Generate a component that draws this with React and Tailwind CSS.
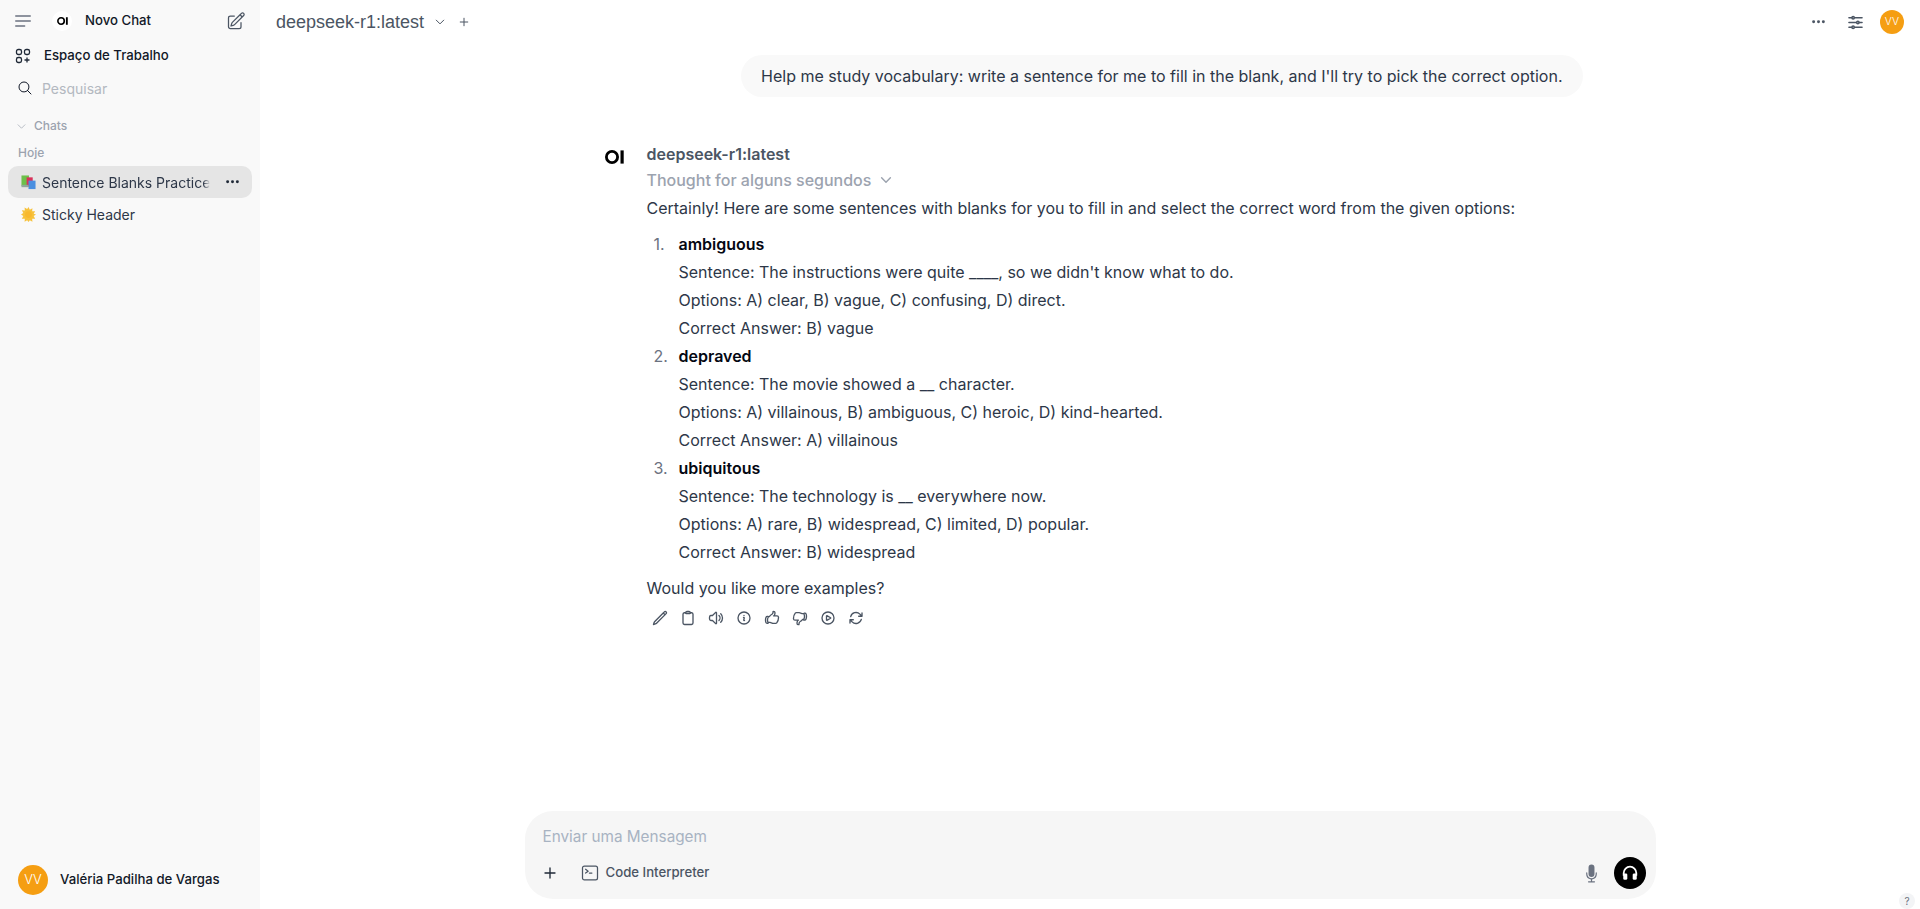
import React from "react";
import {
  HiOutlinePencilSquare, HiOutlineMagnifyingGlass, HiOutlineChevronDown, HiOutlineAdjustmentsHorizontal,
  HiOutlinePencil, HiOutlineClipboard, HiOutlineSpeakerWave, HiOutlineInformationCircle, HiOutlineHandThumbUp,
  HiOutlineHandThumbDown, HiOutlinePlayCircle, HiOutlineArrowPath, HiOutlineCommandLine, HiOutlinePlus, HiMicrophone,
} from "react-icons/hi2";

const Logo = ({ className }) => (
  <svg viewBox="0 0 19 14" className={className} fill="none">
    <circle cx="7" cy="7" r="5.600" stroke="#000" strokeWidth="2.800" />
    <rect x="15.500" y="0.4" width="3.200" height="13.2" fill="#000" />
  </svg>
);

const Dots = ({ className }) => (
  <svg viewBox="0 0 16 4" className={className} fill="currentColor">
    <circle cx="2" cy="2" r="1.800" /><circle cx="8" cy="2" r="1.800" /><circle cx="14" cy="2" r="1.800" />
  </svg>
);

const Books = () => (
  <svg viewBox="0 0 16 16" className="w-[15px] h-[15px] shrink-0">
    <rect x="0.500" y="0.500" width="8" height="11" fill="#6cc04a" />
    <rect x="6" y="2.500" width="6.500" height="10" fill="#d8325a" />
    <rect x="8" y="6" width="7.500" height="9" fill="#4a8fe0" />
    <rect x="0.500" y="10.500" width="7.500" height="2.500" fill="#8fa89a" />
  </svg>
);

const Sun = () => (
  <svg viewBox="0 0 16 16" className="w-[15px] h-[15px] shrink-0">
    <path d="M8 0l1.400 3 2.800-1.600-.3 3.200 3.200-.1-1.600 2.800L16 8l-2.500 1.700 1.600 2.800-3.200-.1.3 3.200-2.800-1.600L8 16l-1.400-2-2.800 1.600.3-3.200-3.200.1 1.600-2.800L0 8l2.500-1.700L.9 3.500l3.200.1-.3-3.200 2.800 1.600z" fill="#f7c23c" />
    <circle cx="8" cy="8" r="3.600" fill="#f8b92e" />
  </svg>
);

const Workspace = () => (
  <svg viewBox="0 0 16 16" className="w-[16px] h-[16px]" fill="none" stroke="#1f2937" strokeWidth="1.300">
    <rect x="1.500" y="1.500" width="5" height="5" rx="1.800" />
    <rect x="9.500" y="1.500" width="5" height="5" rx="1.800" />
    <rect x="1.500" y="9.500" width="5" height="5" rx="1.800" />
    <path d="M12 9.500v5M9.500 12h5" />
  </svg>
);

const Headphone = () => (
  <svg viewBox="0 0 20 20" className="w-[18px] h-[18px]">
    <path d="M3 13V10a7 7 0 0 1 14 0v3" fill="none" stroke="#fff" strokeWidth="2" />
    <rect x="2.500" y="10.500" width="4.500" height="7" rx="1.500" fill="#fff" />
    <rect x="13" y="10.500" width="4.500" height="7" rx="1.500" fill="#fff" />
  </svg>
);

const Avatar = ({ className }) => (
  <div className={`rounded-full bg-[#f59e12] text-white flex items-center justify-center font-['Inter'] font-light ${className}`}>VV</div>
);

const items = [
  { t: "ambiguous", l: ["Sentence: The instructions were quite ____, so we didn't know what to do.", "Options: A) clear, B) vague, C) confusing, D) direct.", "Correct Answer: B) vague"] },
  { t: "depraved", l: ["Sentence: The movie showed a __ character.", "Options: A) villainous, B) ambiguous, C) heroic, D) kind-hearted.", "Correct Answer: A) villainous"] },
  { t: "ubiquitous", l: ["Sentence: The technology is __ everywhere now.", "Options: A) rare, B) widespread, C) limited, D) popular.", "Correct Answer: B) widespread"] },
];

const actions = [HiOutlinePencil, HiOutlineClipboard, HiOutlineSpeakerWave, HiOutlineInformationCircle, HiOutlineHandThumbUp, HiOutlineHandThumbDown, HiOutlinePlayCircle, HiOutlineArrowPath];

export default function App() {
  return (
    <div className="flex h-[909px] w-full overflow-hidden bg-white font-['Inter',sans-serif] text-[#2d3748] relative">
      <aside className="w-[260px] shrink-0 bg-[#f9f9f9] flex flex-col">
        <div className="h-[42px] flex items-center pl-[15px] pr-[14px]">
          <svg viewBox="0 0 16 12" className="w-[16px] h-[12px]" fill="none" stroke="#6b7280" strokeWidth="1.300" strokeLinecap="round">
            <path d="M.7 1h14.600M.7 6h14.600M.7 11h9" />
          </svg>
          <div className="ml-[21px] w-[20px] h-[20px] rounded-full bg-white flex items-center justify-center">
            <Logo className="w-[11px] h-[8px]" />
          </div>
          <span className="ml-[13px] text-[13.200px] font-medium text-[#111827]">Novo Chat</span>
          <HiOutlinePencilSquare className="ml-auto w-[20px] h-[20px] text-[#4b5563]" />
        </div>
        <div className="h-[28px] flex items-center pl-[15px] gap-[13px]">
          <Workspace />
          <span className="text-[13.200px] font-medium text-[#111827]">Espaço de Trabalho</span>
        </div>
        <div className="h-[36px] flex items-center pl-[17px] gap-[9px]">
          <HiOutlineMagnifyingGlass className="w-[16px] h-[16px] text-[#111827]" />
          <span className="text-[14px] text-[#b3b8c0]">Pesquisar</span>
        </div>
        <div className="mt-[8px] h-[24px] flex items-center pl-[16px] gap-[7px] text-[#9ca3af]">
          <HiOutlineChevronDown className="w-[11px] h-[11px]" />
          <span className="text-[12px] font-medium">Chats</span>
        </div>
        <div className="mt-[3px] h-[24px] flex items-center pl-[18px] text-[12px] font-medium text-[#9ca3af]">Hoje</div>
        <div className="mt-[1px] mx-[8px] h-[32px] rounded-[10px] bg-[#e5e5e5] flex items-center pl-[13px] gap-[6px]">
          <Books />
          <span className="text-[14px] text-[#2d3748] w-[168px] whitespace-nowrap overflow-hidden [mask-image:linear-gradient(to_right,black_96%,transparent)]">Sentence Blanks Practice</span>
          <Dots className="ml-[10px] w-[13px] h-[3.500px] text-[#1f2937]" />
        </div>
        <div className="mx-[8px] h-[32px] flex items-center pl-[13px] gap-[6px]">
          <Sun />
          <span className="text-[14px] text-[#2d3748]">Sticky Header</span>
        </div>
        <div className="mt-auto h-[58px] flex items-center pl-[18px] gap-[12px]">
          <Avatar className="w-[30px] h-[30px] text-[13px]" />
          <span className="text-[13.200px] font-medium text-[#111827]">Valéria Padilha de Vargas</span>
        </div>
      </aside>

      <main className="flex-1 flex flex-col min-w-0">
        <header className="h-[44px] shrink-0 flex items-center pl-[16px] pr-[16px]">
          <span className="font-['Liberation_Sans'] text-[18px] text-[#4b5563]">deepseek-r1:latest</span>
          <HiOutlineChevronDown className="ml-[10px] w-[12px] h-[12px] text-[#4b5563]" strokeWidth={2} />
          <HiOutlinePlus className="ml-[12px] w-[12px] h-[12px] text-[#4b5563]" strokeWidth={2} />
          <Dots className="ml-auto w-[13px] h-[3.500px] text-[#4b5563]" />
          <HiOutlineAdjustmentsHorizontal className="ml-[21px] w-[19px] h-[19px] text-[#4b5563]" strokeWidth={2} />
          <Avatar className="ml-[15px] w-[24px] h-[24px] text-[10.500px]" />
        </header>

        <div className="flex-1 min-h-0 w-[985px] mx-auto">
          <div className="mt-[11px] flex justify-end">
            <div className="h-[42px] px-[20px] rounded-[21px] bg-[#f9f9f9] flex items-center text-[16px] whitespace-nowrap">
              Help me study vocabulary: write a sentence for me to fill in the blank, and I'll try to pick the correct option.
            </div>
          </div>
          <div className="mt-[46px] flex">
            <div className="w-[49px] pl-[7px] pt-[7px] shrink-0">
              <Logo className="w-[19px] h-[14px]" />
            </div>
            <div className="flex-1 text-[16px] leading-[28px]">
              <div className="font-semibold text-[#4b5563] h-[22px] leading-[22px]">deepseek-r1:latest</div>
              <div className="mt-[2px] flex items-center h-[26px] text-[#9ca3af] font-medium">
                Thought for alguns segundos
                <HiOutlineChevronDown className="ml-[8px] w-[14px] h-[14px]" strokeWidth={2.500} />
              </div>
              <p className="mt-[1px]">Certainly! Here are some sentences with blanks for you to fill in and select the correct word from the given options:</p>
              <ol className="mt-[8px]">
                {items.map((it, i) => (
                  <li key={it.t} className="flex">
                    <span className="w-[32px] pl-[7px] text-[#6b7280] shrink-0">{i + 1}.</span>
                    <div>
                      <div className="font-semibold text-[#030712]">{it.t}</div>
                      {it.l.map((x) => <div key={x}>{x}</div>)}
                    </div>
                  </li>
                ))}
              </ol>
              <p className="mt-[8px]">Would you like more examples?</p>
              <div className="mt-[8px] flex items-center gap-[12px] pl-[5px] text-[#4b5563]">
                {actions.map((I, i) => <I key={i} className="w-[16px] h-[16px]" strokeWidth={2} />)}
              </div>
            </div>
          </div>
        </div>

        <div className="mb-[10px] mx-auto w-[1131px] h-[88px] rounded-[28px] bg-[#f6f6f6] flex flex-col px-[18px]">
          <div className="pt-[15px] h-[40px] text-[15.300px] text-[#a8b3c2]">Enviar uma Mensagem</div>
          <div className="h-[44px] flex items-center">
            <HiOutlinePlus className="-ml-[1px] w-[16px] h-[16px] text-[#1f2937]" strokeWidth={2} />
            <HiOutlineCommandLine className="ml-[22px] w-[20px] h-[20px] text-[#4b5563]" />
            <span className="ml-[6px] text-[13.200px] font-medium text-[#4b5563]">Code Interpreter</span>
            <HiMicrophone className="ml-auto w-[19px] h-[19px] text-[#6b7280]" />
            <div className="ml-[13px] mr-[-8px] w-[32px] h-[32px] rounded-full bg-black flex items-center justify-center">
              <Headphone />
            </div>
          </div>
        </div>
      </main>

      <div className="absolute right-[5px] bottom-[0px] w-[16px] h-[16px] rounded-full bg-[#f3f4f6] text-[#6b7280] text-[10px] flex items-center justify-center">?</div>
    </div>
  );
}
